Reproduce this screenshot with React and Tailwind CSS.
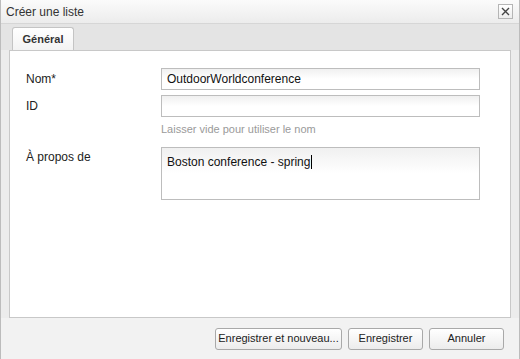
const font = { fontFamily: '"Liberation Sans", Arial, sans-serif' }

function Field({ children, className = '' }) {
  return (
    <div
      className={`w-[319px] border border-[#bdbdbd] bg-white bg-gradient-to-b from-[#f0f0f0] via-white to-white px-[5px] text-[12px] text-[#111] ${className}`}
    >
      {children}
    </div>
  )
}

function Button({ children, className = '' }) {
  return (
    <button
      className={`flex h-[22px] items-center justify-center rounded-[3px] border border-[#a9a9a9] bg-gradient-to-b from-white to-[#ececec] text-[11px] text-[#222] shadow-[inset_0_1px_0_#fff] ${className}`}
    >
      {children}
    </button>
  )
}

export default function App() {
  return (
    <div style={font} className="flex h-[359px] w-[520px] flex-col border-x border-[#bcbcbc] bg-[#ececec]">
      <div className="flex h-[24px] items-center justify-between border-b border-[#d6d6d6] bg-gradient-to-b from-[#fbfbfb] to-[#ececec] pl-[5px] pr-[6px]">
        <span className="text-[12px] text-[#333]">Créer une liste</span>
        <button className="flex h-[15px] w-[15px] items-center justify-center border border-[#b5b5b5] bg-gradient-to-b from-white to-[#ededed]">
          <svg width="9" height="9" viewBox="0 0 9 9">
            <path d="M1 1L8 8M8 1L1 8" stroke="#444" strokeWidth="1.4" />
          </svg>
        </button>
      </div>

      <div className="flex h-[26px] items-end bg-[#e4e4e4] px-[8px]">
        <div className="ml-[3px] flex h-[23px] w-[62px] items-center justify-center rounded-t-[3px] border border-b-0 border-[#c4c4c4] bg-gradient-to-b from-white to-[#f3f3f3] text-[11px] font-bold text-[#333]">
          Général
        </div>
      </div>

      <div className="mx-[8px] flex-1 border border-[#c8c8c8] bg-white pl-[16px] pt-[17px]">
        <div className="grid grid-cols-[135px_319px] items-center gap-y-[5px] text-[12px] text-[#222]">
          <span>Nom*</span>
          <Field className="flex h-[22px] items-center">OutdoorWorldconference</Field>
          <span>ID</span>
          <Field className="h-[22px]" />
          <span />
          <span className="pb-[6px] text-[11px] leading-[14px] text-[#9a9a9a]">Laisser vide pour utiliser le nom</span>
          <span className="self-start pt-[1px]">À propos de</span>
          <Field className="h-[53px] pt-[4px]">
            Boston conference - spring
            <span className="ml-px inline-block h-[14px] w-px translate-y-[3px] bg-black" />
          </Field>
        </div>
      </div>

      <div className="flex h-[41px] items-center justify-end gap-[6px] bg-[#f2f2f2] pr-[15px]">
        <Button className="w-[127px]">Enregistrer et nouveau...</Button>
        <Button className="w-[75px]">Enregistrer</Button>
        <Button className="w-[75px]">Annuler</Button>
      </div>
    </div>
  )
}
